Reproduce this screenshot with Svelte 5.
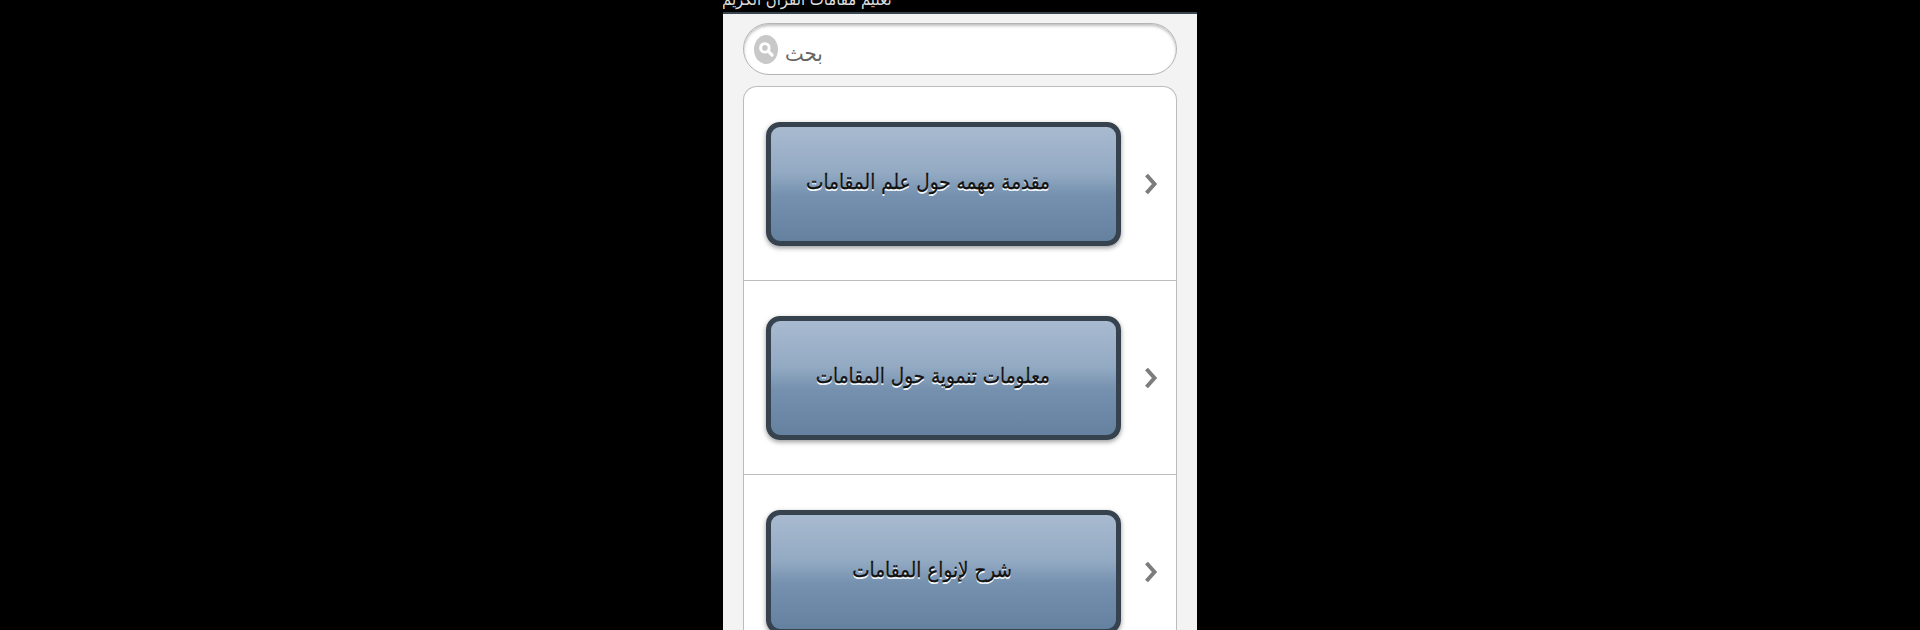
<script>
  const items = [
    { label: 'مقدمة مهمه حول علم المقامات', pad: 66 },
    { label: 'معلومات تنموية حول المقامات', pad: 66 },
    { label: 'شرح لإنواع المقامات', pad: 104 }
  ];
</script>

<div class="screen">
  <div class="phone">
    <header class="title-bar">
      <span>تعليم مقامات القرآن الكريم</span>
    </header>

    <main class="content">
      <div class="search">
        <span class="search-icon">
          <svg width="18" height="18" viewBox="0 0 16 16" fill="none" stroke="#fff" stroke-linecap="round">
            <circle cx="7" cy="7" r="3.8" stroke-width="2.6"></circle>
            <line x1="10.2" y1="10.2" x2="13.4" y2="13.4" stroke-width="2.8"></line>
          </svg>
        </span>
        <span class="search-text">بحث</span>
      </div>

      <ul class="list">
        {#each items as item}
          <li class="row">
            <div class="button" style="padding-right: {item.pad}px">
              <span>{item.label}</span>
            </div>
            <svg class="chevron" width="14" height="24" viewBox="0 0 14 24" fill="none" stroke="#7d7d7d" stroke-width="4">
              <path d="M2.5 3 L10.5 12 L2.5 21"></path>
            </svg>
          </li>
        {/each}
      </ul>
    </main>
  </div>
</div>

<style>
  :global(body) {
    margin: 0;
    background: #000;
  }

  .screen {
    height: 630px;
    overflow: hidden;
    display: flex;
    justify-content: center;
    background: #000;
    font-family: "DejaVu Sans Condensed", "DejaVu Sans", sans-serif;
  }

  .phone {
    width: 474px;
    display: flex;
    flex-direction: column;
    flex-shrink: 0;
  }

  .title-bar {
    height: 12px;
    flex-shrink: 0;
    display: flex;
    align-items: flex-end;
    overflow: hidden;
    background: #000;
    color: #dcdcdc;
    font-size: 16.5px;
    line-height: 24px;
    white-space: nowrap;
  }

  .title-bar span {
    direction: rtl;
    margin-left: -1px;
  }

  .content {
    flex: 1;
    padding: 0 20px;
    background: #f3f3f3;
    border-top: 2px solid #39444e;
    display: flex;
    flex-direction: column;
    gap: 11px;
  }

  .search {
    height: 50px;
    margin-top: 9px;
    display: flex;
    align-items: center;
    gap: 7px;
    padding: 0 10px;
    flex-shrink: 0;
    background: #fff;
    border: 1px solid #b4b4b4;
    border-radius: 26px;
    box-shadow: inset 0 2px 3px rgba(0, 0, 0, 0.25);
  }

  .search-icon {
    width: 24px;
    height: 29px;
    display: flex;
    align-items: center;
    justify-content: center;
    background: #c8c8c8;
    border-radius: 50%;
  }

  .search-text {
    color: #666;
    font-size: 22px;
    margin-top: 8px;
  }

  .list {
    margin: 0;
    padding: 0;
    list-style: none;
    background: #fff;
    border: 1px solid #bdbdbd;
    border-bottom: none;
    border-radius: 14px 14px 0 0;
  }

  .row {
    height: 193px;
    display: flex;
    align-items: center;
    padding: 0 18px 0 22px;
    justify-content: space-between;
    border-bottom: 1px solid #bdbdbd;
  }

  .button {
    width: 355px;
    height: 124px;
    box-sizing: border-box;
    display: flex;
    align-items: center;
    justify-content: flex-end;
    direction: ltr;
    border: 5px solid #36424e;
    border-radius: 14px;
    background: linear-gradient(#a8bad0, #93aac3 40%, #7591af 60%, #64819f);
    box-shadow: 0 2px 5px rgba(0, 0, 0, 0.4);
    color: #111;
    font-size: 20.5px;
    -webkit-text-stroke: 0.3px #111;
    text-shadow: 0 1.5px 0 #f4f7fa;
  }

  .button span {
    direction: rtl;
    margin-bottom: 4px;
  }

  .chevron {
    flex-shrink: 0;
  }
</style>
